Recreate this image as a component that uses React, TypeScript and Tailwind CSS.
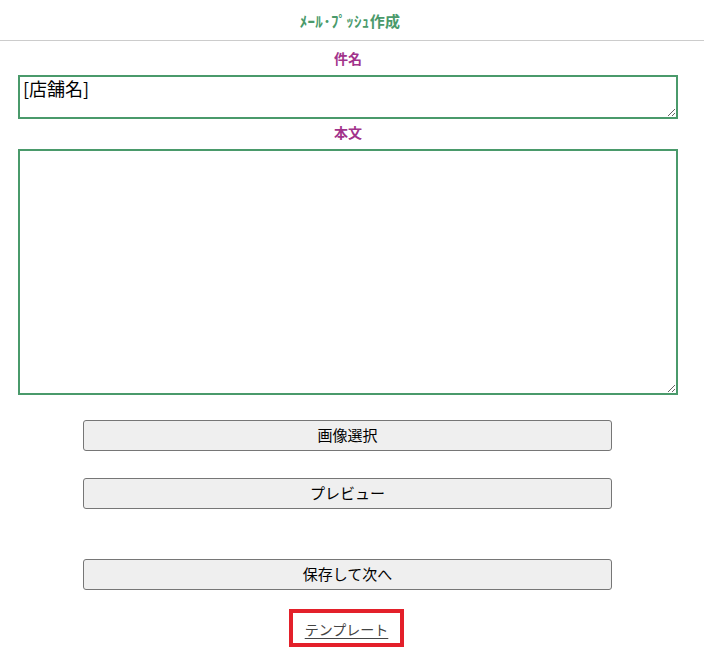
import React from 'react';

const FONT = '"Noto Sans CJK JP", "Noto Sans", sans-serif';

export default function App() {
  return (
    <div className="w-[704px] min-h-[647px] bg-white text-black" style={{ fontFamily: FONT }}>
      <header className="h-[41px] border-b border-[#cccccc] flex items-center justify-center">
        <h1 className="text-[15px] font-bold text-[#4a9a6b] mt-[2px] ml-[-4px] tracking-[0.3px]">ﾒｰﾙ･ﾌﾟｯｼｭ作成</h1>
      </header>

      <div className="w-[660px] ml-[18px] flex flex-col">
        <label className="h-[34px] flex items-center justify-center text-[14px] font-bold text-[#a2338b]">件名</label>
        <textarea
          defaultValue="[店舗名]"
          className="w-full h-[44px] border-2 border-[#4a9a6b] px-[3px] py-0 text-[18px] leading-[22px] outline-none resize-y"
        />
        <label className="h-[30px] flex items-center justify-center pb-[4px] text-[14px] font-bold text-[#a2338b]">本文</label>
        <textarea className="w-full h-[246px] border-2 border-[#4a9a6b] outline-none resize-y" />

        <div className="flex flex-col mt-[25px]">
          <button type="button" className="ml-[65px] w-[529px] h-[31px] bg-[#efefef] border border-[#767676] rounded-[3px] text-[15px]">画像選択</button>
          <button type="button" className="ml-[65px] w-[529px] h-[31px] bg-[#efefef] border border-[#767676] rounded-[3px] text-[15px] mt-[27px]">プレビュー</button>
          <button type="button" className="ml-[65px] w-[529px] h-[31px] bg-[#efefef] border border-[#767676] rounded-[3px] text-[15px] mt-[50px]">保存して次へ</button>
          <div className="ml-[271px] mt-[19px] w-[115px] h-[38px] border-[4px] border-[#e3202a] flex items-center justify-center">
            <a href="#" className="text-[14px] text-[#444444] underline underline-offset-[3px] mt-[2px]">テンプレート</a>
          </div>
        </div>
      </div>
    </div>
  );
}
